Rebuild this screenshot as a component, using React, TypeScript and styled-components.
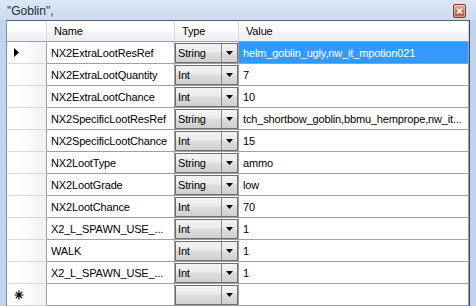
import React from 'react';
import styled, { createGlobalStyle } from 'styled-components';

const GlobalStyle = createGlobalStyle`
  html, body {
    margin: 0;
    padding: 0;
    overflow: hidden;
    background: #bcd3ec;
  }
  body {
    font-family: "Liberation Sans", Arial, sans-serif;
    font-size: 11px;
    color: #000;
  }
`;

const Window = styled.div`
  width: 476px;
  height: 306px;
  display: flex;
  flex-direction: column;
  background: #bfd5ee;
  overflow: hidden;
`;

const TitleBar = styled.div`
  height: 20px;
  flex: none;
  display: flex;
  align-items: center;
  justify-content: space-between;
  padding: 0 10px 0 7px;
  background: linear-gradient(#dce7f5, #cbdbef);
`;

const Title = styled.span`
  font-size: 12px;
  color: #1e2a3a;
  padding-top: 2px;
`;

const CloseButton = styled.div`
  width: 11px;
  height: 12px;
  margin-top: 2px;
  display: flex;
  align-items: center;
  justify-content: center;
  border: 1px solid #7b4232;
  border-radius: 2px;
  background: linear-gradient(#e9b8a8, #c9755f 50%, #b65a45);
  box-shadow: inset 0 0 0 1px rgba(255, 255, 255, 0.35);
`;

const Body = styled.div`
  flex: 1;
  padding: 0 6px;
  min-height: 0;
`;

const Grid = styled.div`
  display: grid;
  grid-template-columns: 40px 128px 64px 1fr;
  grid-auto-rows: 22px;
  grid-template-rows: 21px;
  background: #fff;
  border-top: 1px solid #5c6470;
  border-right: 1px solid #3d4654;
  border-left: 1px solid #8393a8;
  letter-spacing: -0.15px;
`;

const HeaderCell = styled.div<{ $corner?: boolean }>`
  display: flex;
  align-items: center;
  padding-left: ${(p) => (p.$corner ? 0 : 7)}px;
  border-right: 1px solid #d5d5d5;
  border-bottom: 1px solid #a0a0a0;
  background: linear-gradient(#ffffff, #ffffff 50%, #f4f5f7 55%, #eceef1);
  white-space: nowrap;
`;

const RowHeader = styled.div`
  display: flex;
  align-items: center;
  padding-left: 6px;
  border-right: 1px solid #a0a0a0;
  border-bottom: 1px solid #d8d8d8;
  background: linear-gradient(to right, #ffffff, #ffffff 25%, #f1f2f4);
`;

const Cell = styled.div<{ $selected?: boolean }>`
  display: flex;
  align-items: center;
  padding-left: 4px;
  border-right: 1px solid #a0a0a0;
  border-bottom: 1px solid #a0a0a0;
  background: ${(p) => (p.$selected ? '#3399ff' : '#fff')};
  color: ${(p) => (p.$selected ? '#fff' : '#000')};
  white-space: nowrap;
  overflow: hidden;
`;

const TypeCell = styled.div`
  display: flex;
  align-items: center;
  border-right: 1px solid #a0a0a0;
  border-bottom: 1px solid #a0a0a0;
  padding: 1px 0 0 0;
`;

const Combo = styled.div`
  flex: 1;
  height: 18px;
  display: flex;
  border: 1px solid #707070;
  background: linear-gradient(#f3f3f3, #ebebeb 45%, #dddddd 50%, #d0d0d0);
`;

const ComboText = styled.span`
  flex: 1;
  padding-left: 2px;
  display: flex;
  align-items: center;
`;

const ComboButton = styled.span`
  width: 15px;
  display: flex;
  align-items: center;
  justify-content: center;
  border-left: 1px solid #8a8a8a;
`;

const rows = [
  { name: 'NX2ExtraLootResRef', type: 'String', value: 'helm_goblin_ugly,nw_it_mpotion021' },
  { name: 'NX2ExtraLootQuantity', type: 'Int', value: '7' },
  { name: 'NX2ExtraLootChance', type: 'Int', value: '10' },
  { name: 'NX2SpecificLootResRef', type: 'String', value: 'tch_shortbow_goblin,bbmu_hemprope,nw_it...' },
  { name: 'NX2SpecificLootChance', type: 'Int', value: '15' },
  { name: 'NX2LootType', type: 'String', value: 'ammo' },
  { name: 'NX2LootGrade', type: 'String', value: 'low' },
  { name: 'NX2LootChance', type: 'Int', value: '70' },
  { name: 'X2_L_SPAWN_USE_...', type: 'Int', value: '1' },
  { name: 'WALK', type: 'Int', value: '1' },
  { name: 'X2_L_SPAWN_USE_...', type: 'Int', value: '1' },
];

function DropArrow() {
  return (
    <svg width="7" height="4" viewBox="0 0 7 4">
      <path d="M0 0h7L3.5 4z" fill="#000" />
    </svg>
  );
}

function CurrentRowArrow() {
  return (
    <svg width="6" height="9" viewBox="0 0 6 9" style={{ marginLeft: 1 }}>
      <path d="M0 0l5 4.5L0 9z" fill="#000" />
    </svg>
  );
}

function NewRowStar() {
  return (
    <svg width="10" height="10" viewBox="0 0 10 10" style={{ marginLeft: 1 }}>
      <g stroke="#000" strokeWidth="1.2">
        <path d="M5 0.5v9M0.5 5h9M1.8 1.8l6.4 6.4M8.2 1.8L1.8 8.2" />
      </g>
    </svg>
  );
}

function TypeCombo({ text }: { text: string }) {
  return (
    <TypeCell>
      <Combo>
        <ComboText>{text}</ComboText>
        <ComboButton>
          <DropArrow />
        </ComboButton>
      </Combo>
    </TypeCell>
  );
}

export default function App() {
  return (
    <>
      <GlobalStyle />
      <Window>
        <TitleBar>
          <Title>"Goblin",</Title>
          <CloseButton>
            <svg width="7" height="6" viewBox="0 0 7 6">
              <path d="M1 0.5l5 5M6 0.5l-5 5" stroke="#fff" strokeWidth="1.6" />
            </svg>
          </CloseButton>
        </TitleBar>
        <Body>
          <Grid>
            <HeaderCell $corner />
            <HeaderCell>Name</HeaderCell>
            <HeaderCell>Type</HeaderCell>
            <HeaderCell>Value</HeaderCell>

            {rows.map((r, i) => (
              <React.Fragment key={i}>
                <RowHeader>{i === 0 && <CurrentRowArrow />}</RowHeader>
                <Cell>{r.name}</Cell>
                <TypeCombo text={r.type} />
                <Cell $selected={i === 0}>{r.value}</Cell>
              </React.Fragment>
            ))}

            <RowHeader>
              <NewRowStar />
            </RowHeader>
            <Cell />
            <TypeCombo text="" />
            <Cell />
          </Grid>
        </Body>
      </Window>
    </>
  );
}
